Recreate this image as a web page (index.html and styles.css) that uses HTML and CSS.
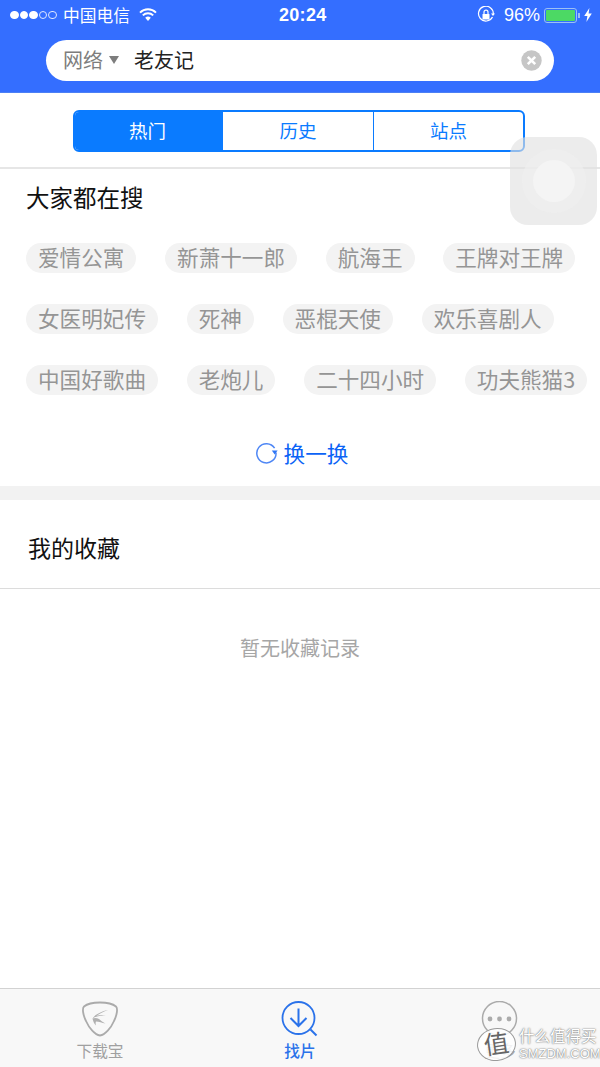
FILE: index.html
```html
<!DOCTYPE html>
<html lang="zh-CN">
<head>
<meta charset="utf-8">
<title>找片</title>
<link rel="stylesheet" href="styles.css">
</head>
<body>
<div class="page">
  <header class="header">
    <div class="status">
      <div class="status-left">
        <span class="signal"><i class="on"></i><i class="on"></i><i class="on"></i><i></i><i></i></span>
        <span class="carrier">中国电信</span>
        <svg class="wifi" width="18" height="13" viewBox="0 0 18 13"><path d="M1 4.6 A11.5 11.5 0 0 1 17 4.6" fill="none" stroke="#fff" stroke-width="2"/><path d="M3.8 7.4 A7.5 7.5 0 0 1 14.2 7.4" fill="none" stroke="#fff" stroke-width="2"/><path d="M6.2 9.8 A4 4 0 0 1 11.8 9.8 L9 13 Z" fill="#fff"/></svg>
      </div>
      <div class="time">20:24</div>
      <div class="status-right">
        <svg width="18" height="18" viewBox="0 0 18 18"><path d="M15.5 11 A7.4 7.4 0 1 1 16.3 8" fill="none" stroke="#fff" stroke-width="1.2"/><path d="M14 7.5 L18 7.5 L16 10 Z" fill="#fff"/><rect x="5.5" y="8" width="7" height="5.5" rx=".6" fill="#fff"/><path d="M7 8 V6.2 A2 2 0 0 1 11 6.2 V8" fill="none" stroke="#fff" stroke-width="1.2"/></svg>
        <span class="pct">96%</span>
        <span class="battery"><span class="battery-fill"></span></span><span class="battery-cap"></span>
        <svg class="bolt" width="8" height="14" viewBox="0 0 8 14"><path d="M5.4 0 L0.2 8 H3.4 L2.4 14 L7.8 5.6 H4.6 Z" fill="#fff"/></svg>
      </div>
    </div>
    <div class="search">
      <span class="scope">网络</span>
      <span class="caret"></span>
      <span class="query">老友记</span>
      <svg class="clear" width="21" height="21" viewBox="0 0 21 21"><circle cx="10.5" cy="10.5" r="10.2" fill="#c6c6c6"/><path d="M6.8 6.8 L14.2 14.2 M14.2 6.8 L6.8 14.2" stroke="#fff" stroke-width="2.6"/></svg>
    </div>
  </header>

  <nav class="segments-wrap">
    <div class="segments">
      <span class="seg seg-active">热门</span>
      <span class="seg seg-mid">历史</span>
      <span class="seg seg-last">站点</span>
    </div>
  </nav>

  <section class="hot">
    <h2 class="hot-title">大家都在搜</h2>
    <div class="tag-row"><span class="tag">爱情公寓</span><span class="tag">新萧十一郎</span><span class="tag">航海王</span><span class="tag">王牌对王牌</span></div>
    <div class="tag-row"><span class="tag">女医明妃传</span><span class="tag">死神</span><span class="tag">恶棍天使</span><span class="tag">欢乐喜剧人</span></div>
    <div class="tag-row"><span class="tag">中国好歌曲</span><span class="tag">老炮儿</span><span class="tag">二十四小时</span><span class="tag">功夫熊猫3</span></div>
    <div class="refresh">
      <svg width="23" height="23" viewBox="0 0 23 23"><path d="M19.6 7.2 A9.6 9.6 0 1 0 21 11.5" fill="none" stroke="#4f87f5" stroke-width="1.5"/><path d="M16.8 9.6 L22.6 9.6 L19.7 13.4 Z" fill="#2f76f6"/></svg>
      <span>换一换</span>
    </div>
  </section>

  <div class="band"></div>

  <section class="favs">
    <h2 class="favs-title">我的收藏</h2>
    <p class="empty">暂无收藏记录</p>
  </section>

  <footer class="tabbar">
    <div class="tab">
      <svg width="38" height="36" viewBox="0 0 38 36"><path d="M19 1.5 C26 1.5 32 3 35 5.5 C37 7.5 36 14 33 20 C30 27 24 34 19 34.5 C14 34 8 27 5 20 C2 14 1 7.5 3 5.5 C6 3 12 1.5 19 1.5 Z" fill="none" stroke="#ababab" stroke-width="1.8"/><path d="M27 9 C20 10.5 14 13.5 11.5 17.5 C14 16.5 16 17 18 18 C20 19.5 22 21.5 24.5 22.5 C21 22 18 20.5 15 20.5 C14.5 21.5 14.5 23 15 24.5 C13 22.5 12 20 11.5 17.5 C15 15 20 14 25 14.5 C21 13.5 18 14 15.5 15 C18.5 12.5 22.5 10.5 27 9 Z" fill="#b0b0b0"/></svg>
      <span class="tab-label">下载宝</span>
    </div>
    <div class="tab tab-active">
      <svg width="38" height="36" viewBox="0 0 38 36"><circle cx="17.5" cy="17" r="16" fill="none" stroke="#2a72ea" stroke-width="1.8"/><path d="M17.5 7.5 V25 M9.5 17 L17.5 25 L25.5 17" fill="none" stroke="#2a72ea" stroke-width="2"/><path d="M29.5 28.5 L35.5 34.5" stroke="#2a72ea" stroke-width="2"/></svg>
      <span class="tab-label">找片</span>
    </div>
    <div class="tab">
      <svg width="38" height="36" viewBox="0 0 38 36"><circle cx="18.5" cy="17.5" r="17" fill="none" stroke="#ababab" stroke-width="1.5"/><circle cx="9" cy="18" r="2.4" fill="#ababab"/><circle cx="18.5" cy="18" r="2.4" fill="#ababab"/><circle cx="28" cy="18" r="2.4" fill="#ababab"/></svg>
      <span class="tab-label">更多</span>
    </div>
  </footer>

  <div class="assist"><div class="assist-mid"><div class="assist-core"></div></div></div>

  <div class="watermark">
    <div class="wm-seal"><span>值</span></div>
    <div class="wm-text"><span class="wm-cn">什么值得买</span><span class="wm-en">SMZDM.COM</span></div>
  </div>
</div>
</body>
</html>
```

FILE: styles.css
```css
* { box-sizing: border-box; }
html, body { margin: 0; padding: 0; }
body {
  width: 600px;
  height: 1067px;
  overflow: hidden;
  background: #fff;
  font-family: "Noto Sans CJK SC", "Noto Sans", sans-serif;
}
.page {
  position: relative;
  width: 600px;
  height: 1067px;
  display: flex;
  flex-direction: column;
}
.header {
  height: 93px;
  background: #346eff;
  border-bottom: 1px solid #4c80f5;
  flex: none;
}
.status {
  height: 30px;
  padding: 0 8px 0 10px;
  display: flex;
  align-items: center;
  justify-content: space-between;
  color: #fff;
  position: relative;
}
.status-left, .status-right { display: flex; align-items: center; }
.signal { display: flex; gap: 1px; }
.signal i {
  width: 8.6px;
  height: 8.6px;
  border-radius: 50%;
  border: 1px solid #dfe8ff;
}
.signal i.on { background: #fff; border-color: #fff; }
.carrier { font-size: 16.75px; line-height: 20px; margin-left: 6px; }
.wifi { margin-left: 9px; margin-top: -2px; }
.time {
  font-family: "Liberation Sans", sans-serif;
  font-weight: 700;
  font-size: 18px;
  letter-spacing: .3px;
  position: absolute;
  left: 279px;
  top: 5px;
}
.pct {
  font-family: "Liberation Sans", sans-serif;
  font-size: 18px;
  margin-left: 9px;
}
.battery {
  width: 33px;
  height: 15px;
  border: 1px solid #9cc0f5;
  border-radius: 3px;
  padding: 1px;
  margin-left: 4px;
  display: flex;
}
.battery-fill { flex: 1; background: #4cd964; border-radius: 1px; }
.battery-cap { width: 2px; height: 5px; background: #9cc0f5; margin-left: 1px; }
.bolt { margin-left: 4px; }
.search {
  margin: 10px 46px 0;
  height: 41px;
  background: #fff;
  border-radius: 20.5px;
  display: flex;
  align-items: center;
  padding: 0 11px 2px 17px;
}
.scope { font-size: 20px; line-height: 28px; color: #7d7d7d; }
.caret {
  width: 0;
  height: 0;
  margin-left: 6px;
  border-left: 5.5px solid transparent;
  border-right: 5.5px solid transparent;
  border-top: 8px solid #7d7d7d;
}
.query { font-size: 20px; line-height: 28px; color: #222; margin-left: 15px; flex: 1; }
.clear { flex: none; transform: translate(-1px, 1px); }
.segments-wrap {
  height: 76px;
  flex: none;
  padding: 17px 2px 0 0;
  display: flex;
  justify-content: center;
  border-bottom: 2px solid #e6e6e6;
}
.segments {
  width: 452px;
  height: 42px;
  border: 2px solid #0a7bff;
  border-radius: 6px;
  display: flex;
  overflow: hidden;
}
.seg {
  font-size: 18.5px;
  line-height: 37px;
  text-align: center;
  color: #0a7bff;
}
.seg-active {
  flex: 0 0 148px;
  padding-right: 3px;
  background: #0a7bff;
  color: #fff;
}
.seg-mid { flex: 0 0 150px; }
.seg-last { flex: 1; border-left: 1.5px solid #0a7bff; }
.hot { flex: none; height: 317px; padding-left: 26px; }
.hot-title {
  margin: 0;
  font-size: 23.5px;
  font-weight: 400;
  line-height: 30px;
  color: #111;
  padding-top: 13px;
  height: 58px;
}
.tag-row {
  display: flex;
  gap: 28.7px;
  height: 61px;
  align-items: center;
}
.tag {
  height: 30px;
  line-height: 28px;
  padding: 0 12px;
  font-size: 21.6px;
  color: #959595;
  background: #f3f3f3;
  border-radius: 15px;
  white-space: nowrap;
}
.refresh {
  display: flex;
  align-items: center;
  justify-content: center;
  gap: 6px;
  margin-left: -23px;
  margin-top: 27px;
  height: 30px;
  color: #0b63f6;
  font-size: 21.6px;
}
.band { height: 14px; flex: none; background: #f2f2f2; }
.favs { flex: 1; }
.favs-title {
  margin: 0;
  height: 89px;
  padding: 31px 0 0 28px;
  font-size: 23px;
  line-height: 32px;
  font-weight: 400;
  color: #111;
  border-bottom: 1px solid #dcdcdc;
}
.empty {
  margin: 45px 0 0;
  text-align: center;
  font-size: 20px;
  line-height: 28px;
  color: #a6a6a6;
}
.tabbar {
  height: 79px;
  flex: none;
  background: #f8f8f8;
  border-top: 1px solid #d2d2d2;
  display: flex;
  padding-top: 12px;
}
.tab {
  flex: 1;
  display: flex;
  flex-direction: column;
  align-items: center;
  color: #a0a0a0;
}
.tab-active { color: #2a72ea; }
.tab-label { font-size: 15.7px; line-height: 20px; margin-top: 4px; }
.tab-active .tab-label { font-weight: 500; }
.assist {
  position: absolute;
  left: 510px;
  top: 137px;
  width: 87px;
  height: 88px;
  background: rgba(225, 225, 225, .62);
  border-radius: 18px;
  display: flex;
  align-items: center;
  justify-content: center;
}
.assist-mid {
  width: 64px;
  height: 64px;
  border-radius: 50%;
  background: rgba(240, 240, 240, .6);
  display: flex;
  align-items: center;
  justify-content: center;
}
.assist-core {
  width: 42px;
  height: 42px;
  border-radius: 50%;
  background: #f4f4f4;
}
.watermark {
  position: absolute;
  left: 477px;
  top: 1025px;
  display: flex;
  align-items: center;
  gap: 3px;
  color: #fff;
}
.wm-seal {
  width: 39px;
  height: 33px;
  border-radius: 50%;
  border: 1.5px solid #9a9a9a;
  background: rgba(255, 255, 255, .85);
  color: #666;
  text-align: center;
  font-size: 25px;
  line-height: 27px;
  transform: rotate(-8deg);
}
.wm-text {
  display: flex;
  flex-direction: column;
  align-items: flex-start;
}
.wm-cn {
  font-size: 15.5px;
  line-height: 20px;
  color: #fff;
  text-shadow: 0 0 2px #777, 0 0 1px #777;
  white-space: nowrap;
}
.wm-en {
  font-family: "Liberation Sans", sans-serif;
  font-size: 13px;
  line-height: 18px;
  color: #fff;
  text-shadow: 0 0 2px #777, 0 0 1px #777;
  white-space: nowrap;
}
```
